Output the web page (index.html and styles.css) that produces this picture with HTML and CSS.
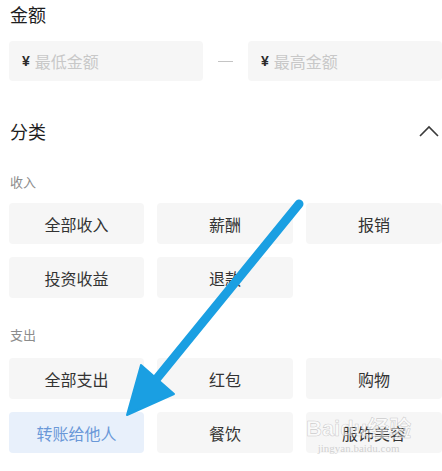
FILE: index.html
```html
<!DOCTYPE html>
<html lang="zh-CN">
  <head>
    <meta charset="UTF-8" />
    <meta name="viewport" content="width=device-width, initial-scale=1.0" />
    <title>筛选</title>
    <link rel="stylesheet" href="styles.css">
  </head>
  <body>
    <div class="page">
      <h3 class="block-title">金额</h3>
      <div class="range">
        <div class="money-input"><span class="yen">¥</span><span class="placeholder">最低金额</span></div>
        <span class="dash"></span>
        <div class="money-input"><span class="yen">¥</span><span class="placeholder">最高金额</span></div>
      </div>

      <div class="block-head">
        <h3 class="block-title">分类</h3>
        <svg class="chevron" width="20" height="12" viewBox="0 0 20 12">
          <polyline points="1,11 10,2 19,11" fill="none" stroke="#3a3a3a" stroke-width="1.6" />
        </svg>
      </div>

      <p class="group-label">收入</p>
      <div class="tags">
        <div class="tag">全部收入</div>
        <div class="tag">薪酬</div>
        <div class="tag">报销</div>
        <div class="tag">投资收益</div>
        <div class="tag">退款</div>
      </div>

      <p class="group-label out">支出</p>
      <div class="tags">
        <div class="tag">全部支出</div>
        <div class="tag">红包</div>
        <div class="tag">购物</div>
        <div class="tag active">转账给他人</div>
        <div class="tag">餐饮</div>
        <div class="tag">服饰美容</div>
      </div>
    </div>

    <!-- annotation arrow drawn over the screenshot -->
    <svg class="arrow" width="442" height="471" viewBox="0 0 442 471">
      <line x1="299" y1="204" x2="154" y2="382" stroke="#1a9fe2" stroke-width="9" stroke-linecap="round" />
      <polygon points="141,365 127,415 174,394" fill="#1a9fe2" stroke="#1a9fe2" stroke-width="2" stroke-linejoin="round" />
    </svg>

    <div class="watermark">
      <span class="wm-logo">Bai<b>du</b>经验</span>
      <span class="wm-url">jingyan.baidu.com</span>
    </div>
  </body>
</html>
```

FILE: styles.css
```css
html,
body {
  margin: 0;
  background: #ffffff;
  overflow: hidden;
}
body {
  font-family: "Noto Sans CJK SC", "Noto Sans", sans-serif;
  color: #222;
  position: relative;
  width: 442px;
  height: 471px;
}
.page {
  padding: 2px 0 0 9px;
}
.block-title {
  margin: 0;
  font-size: 18px;
  line-height: 24px;
  font-weight: 400;
  color: #1e1e1e;
  padding-left: 1px;
}
.range {
  display: flex;
  align-items: center;
  margin-top: 15px;
}
.money-input {
  width: 194px;
  height: 40px;
  flex-shrink: 0;
  background: #f6f6f6;
  border-radius: 4px;
  display: flex;
  align-items: center;
  padding-left: 13px;
  box-sizing: border-box;
  gap: 5px;
}
.yen {
  font-family: "Liberation Sans", sans-serif;
  font-weight: 700;
  font-size: 14px;
  color: #2a2a2a;
}
.placeholder {
  font-size: 16px;
  color: #c8c8c8;
}
.dash {
  width: 15px;
  height: 1px;
  margin: 0 15px;
  background: #c4c4c4;
  flex-shrink: 0;
}
.block-head {
  display: flex;
  justify-content: space-between;
  align-items: center;
  margin-top: 38px;
  width: 430px;
}
.chevron {
  display: block;
}
.group-label {
  margin: 30px 0 0 1px;
  font-size: 13px;
  line-height: 18px;
  color: #8c8c8c;
}
.group-label.out {
  margin-top: 28px;
}
.tags {
  display: grid;
  grid-template-columns: 135px 136px 136px;
  gap: 13px;
  margin-top: 12px;
}
.group-label.out + .tags {
  margin-top: 14px;
}
.tag {
  height: 41px;
  background: #f6f6f6;
  border-radius: 4px;
  display: flex;
  align-items: center;
  justify-content: center;
  font-size: 16px;
  color: #333;
}
.tag.active {
  background: #e8f0fb;
  color: #6a98d8;
}
.arrow {
  position: absolute;
  left: 0;
  top: 0;
  pointer-events: none;
}
.watermark {
  position: absolute;
  left: 306px;
  top: 417px;
  display: flex;
  flex-direction: column;
  align-items: center;
  pointer-events: none;
  color: rgba(255, 255, 255, 0.55);
  -webkit-text-stroke: 0.6px rgba(150, 150, 150, 0.45);
}
.wm-logo {
  font-family: "Liberation Sans", "Noto Sans CJK SC", sans-serif;
  font-size: 22px;
  font-weight: 700;
  line-height: 24px;
}
.wm-logo b {
  font-weight: 700;
}
.wm-url {
  font-family: "Liberation Serif", serif;
  font-size: 11px;
  line-height: 14px;
  -webkit-text-stroke: 0;
  color: rgba(170, 170, 170, 0.5);
}
```
